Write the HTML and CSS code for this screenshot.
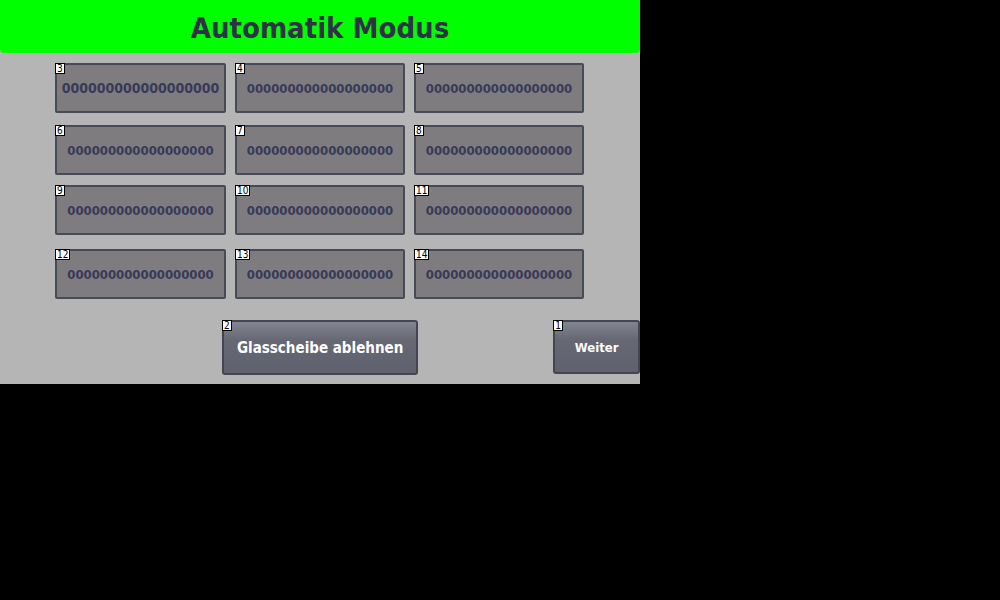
FILE: index.html
```html
<!DOCTYPE html>
<html>
<head>
<meta charset="utf-8">
<link rel="stylesheet" href="styles.css">
</head>
<body>
<div class="screen">
  <div class="header">Automatik Modus</div>
  <div class="grid">
    <div class="field big"><span class="badge">3</span>000000000000000000</div>
    <div class="field"><span class="badge">4</span>000000000000000000</div>
    <div class="field"><span class="badge">5</span>000000000000000000</div>
    <div class="field"><span class="badge">6</span>000000000000000000</div>
    <div class="field"><span class="badge">7</span>000000000000000000</div>
    <div class="field"><span class="badge">8</span>000000000000000000</div>
    <div class="field"><span class="badge">9</span>000000000000000000</div>
    <div class="field"><span class="badge">10</span>000000000000000000</div>
    <div class="field"><span class="badge">11</span>000000000000000000</div>
    <div class="field"><span class="badge">12</span>000000000000000000</div>
    <div class="field"><span class="badge">13</span>000000000000000000</div>
    <div class="field"><span class="badge">14</span>000000000000000000</div>
  </div>
  <div class="actions">
    <div class="btn reject"><span class="badge">2</span>Glasscheibe ablehnen</div>
    <div class="btn next"><span class="badge">1</span>Weiter</div>
  </div>
</div>
</body>
</html>
```

FILE: styles.css
```css
html, body {
  margin: 0;
  padding: 0;
  background: #000;
}
body {
  width: 1000px;
  height: 600px;
  overflow: hidden;
  font-family: "DejaVu Sans Condensed", "DejaVu Sans", sans-serif;
  font-stretch: condensed;
}
.screen {
  width: 640px;
  height: 384px;
  background: #b5b5b5;
  overflow: hidden;
}
.header {
  height: 53px;
  background: #00ff00;
  border-radius: 0 0 4px 4px;
  display: flex;
  align-items: center;
  justify-content: center;
  color: #2f3148;
  font-size: 29px;
  font-weight: bold;
  padding-top: 2px;
  box-sizing: border-box;
}
.grid {
  margin-top: 10px;
  padding-left: 55px;
  display: grid;
  grid-template-columns: 171px 170px 170px;
  column-gap: 9px;
  grid-template-rows: 62px 60px 64px 50px;
  align-items: start;
}
.field {
  position: relative;
  height: 50px;
  box-sizing: border-box;
  background: #7f7c80;
  border: 2px solid #474b55;
  border-radius: 2px;
  display: flex;
  align-items: center;
  justify-content: center;
  color: #363a58;
  font-size: 13px;
  font-weight: bold;
}
.field.big {
  font-size: 14px;
}
.badge {
  position: absolute;
  left: -2px;
  top: -2px;
  background: #fff;
  border: 1px solid #000;
  color: #000;
  font-family: "DejaVu Sans Condensed", "DejaVu Sans", sans-serif;
  font-weight: normal;
  font-size: 10px;
  line-height: 9px;
  padding: 0 1px;
  height: 9px;
}
.actions {
  margin-top: 21px;
  padding-left: 222px;
  display: flex;
  align-items: flex-start;
}
.btn {
  position: relative;
  box-sizing: border-box;
  border: 2px solid #43464f;
  border-radius: 3px;
  background: linear-gradient(#82848f 0, #666874 35%, #5f616e 100%);
  color: #fff;
  font-weight: bold;
  display: flex;
  align-items: center;
  justify-content: center;
  padding-top: 1px;
}
.reject {
  width: 197px;
  height: 55px;
  font-size: 15px;
}
.next {
  margin-left: 135px;
  width: 87px;
  height: 54px;
  font-size: 13px;
}
```
